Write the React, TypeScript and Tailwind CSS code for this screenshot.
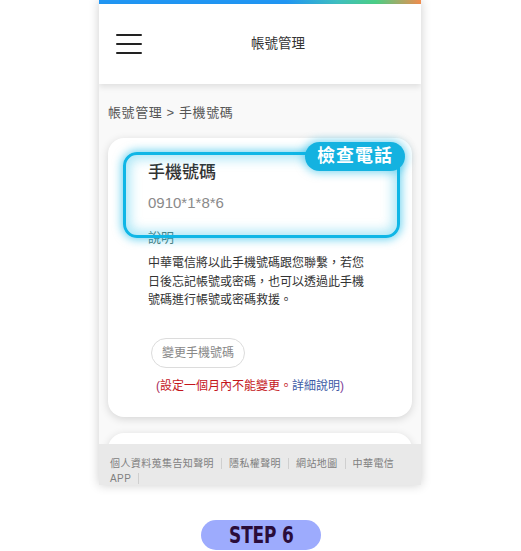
import React from 'react';

const FONT = "font-['Liberation_Sans','Noto_Sans_CJK_TC',sans-serif]";

const Hamburger: React.FC = () => (
  <div className="ml-[17px] flex w-[26px] flex-col gap-[7px]">
    <span className="block h-[2px] w-full rounded bg-[#222]" />
    <span className="block h-[2px] w-full rounded bg-[#222]" />
    <span className="block h-[2px] w-full rounded bg-[#222]" />
  </div>
);

const footerLinks = ['個人資料蒐集告知聲明', '隱私權聲明', '網站地圖'];

const App: React.FC = () => {
  return (
    <div className={`h-[551px] w-[521px] overflow-hidden bg-white ${FONT}`}>
      {/* Phone frame */}
      <div className="ml-[99px] flex h-[485px] w-[322px] flex-col overflow-hidden bg-white shadow-[0_0_10px_rgba(0,0,0,0.2)]">
        <div className="h-[4px] w-full shrink-0 bg-[linear-gradient(to_right,#2196f3_0%,#2196f3_58%,#3fbfc0_74%,#4ccf86_86%,#f28c4e_100%)]" />

        {/* Header */}
        <div className="relative z-10 flex h-[80px] shrink-0 items-center bg-white shadow-[0_3px_6px_rgba(0,0,0,0.1)]">
          <Hamburger />
          <div className="flex-1 pr-[7px] text-center text-[13.5px] text-[#333]">帳號管理</div>
        </div>

        {/* Main */}
        <div className="h-[360px] shrink-0 overflow-hidden bg-[#f9f9f9] px-[9px] pt-[19px]">
          <div className="text-[13px] leading-[20px] tracking-[0.6px] text-[#555]">帳號管理 &gt; 手機號碼</div>

          <div className="relative mt-[15px] rounded-[16px] bg-white pb-[22px] pl-[40px] pt-[23px] shadow-[0_2px_9px_rgba(0,0,0,0.15)]">
            {/* highlight annotation */}
            <div className="absolute left-[15px] top-[14px] h-[86px] w-[277px] rounded-[14px] border-[3px] border-[#0fb6e6] shadow-[0_0_8px_2px_rgba(15,182,230,0.55),inset_0_0_12px_4px_rgba(15,182,230,0.35)]" />
            <div className="absolute left-[197px] top-[4px] flex h-[29px] w-[100px] items-center justify-center rounded-full bg-[#14b2e0] text-[18px] font-bold tracking-[1px] text-white shadow-[0_0_8px_2px_rgba(15,182,230,0.5)]">
              檢查電話
            </div>

            <div className="text-[17px] font-medium leading-[24px] text-[#333]">手機號碼</div>
            <div className="mt-[7px] text-[15px] leading-[22px] text-[#8a8a8a]">0910*1*8*6</div>
            <div className="mt-[15px] text-[13px] leading-[18px] text-[#4f7775]">說明</div>
            <div className="mt-[7px] text-[12px] leading-[18.5px] text-[#333]">
              <span className="block">中華電信將以此手機號碼跟您聯繫，若您</span>
              <span className="block">日後忘記帳號或密碼，也可以透過此手機</span>
              <span className="block">號碼進行帳號或密碼救援。</span>
            </div>
            <div className="mt-[28px] pl-[3px]">
              <button className="flex h-[30px] w-[94px] items-center justify-center rounded-full border border-[#dcdcdc] bg-white text-[12px] text-[#888]">
                變更手機號碼
              </button>
            </div>
            <div className="mt-[9px] pl-[8px] text-[12px] leading-[18px]">
              <span className="text-[#a8285a]">(</span>
              <span className="text-[#c4161c]">設定一個月內不能變更。</span>
              <span className="text-[#3d5aa6]">詳細說明</span>
              <span className="text-[#7d3c98]">)</span>
            </div>
          </div>

          <div className="mt-[16px] h-[40px] rounded-[16px] bg-white shadow-[0_2px_9px_rgba(0,0,0,0.15)]" />
        </div>

        {/* Footer */}
        <div className="flex-1 bg-[#e9e9e9] px-[11px] pt-[12px] text-[10px] leading-[15px] tracking-[0.4px] text-[#808080]">
          {footerLinks.map((l) => (
            <span key={l} className="mr-[7px] border-r border-[#cfcfcf] pr-[7px]">
              {l}
            </span>
          ))}
          <span className="border-r border-[#cfcfcf] pr-[7px]">
            中華電信
            <br />
            APP
          </span>
        </div>
      </div>

      {/* Step pill */}
      <div className="mt-[35px] flex justify-center">
        <div className="ml-[1px] flex h-[30px] w-[120px] items-center justify-center rounded-full bg-[#9dabfd]">
          <span className="inline-block scale-x-[0.82] font-['DejaVu_Sans_Condensed','Liberation_Sans',sans-serif] text-[23px] font-bold leading-none tracking-[-0.2px] text-[#2a0d3a]">
            STEP 6
          </span>
        </div>
      </div>
    </div>
  );
};

export default App;
